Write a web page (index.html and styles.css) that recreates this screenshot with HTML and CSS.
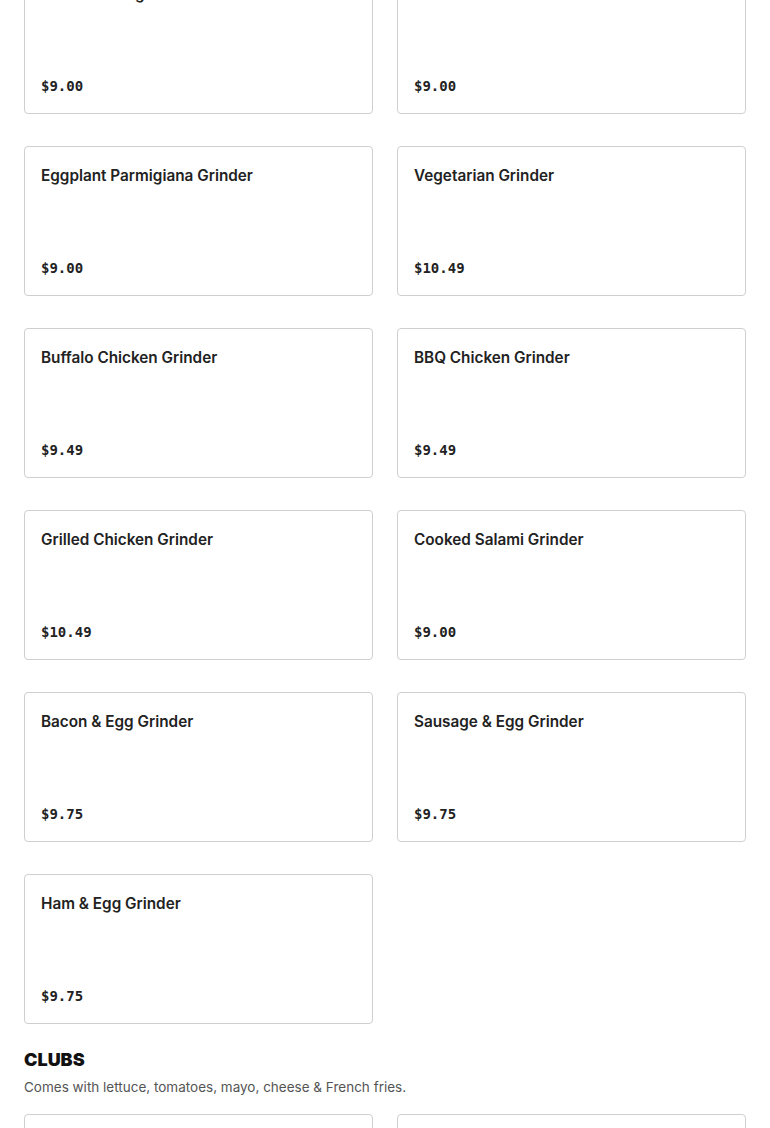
FILE: index.html
```html
<!DOCTYPE html>
<html>
<head>
<meta charset="utf-8">
<link rel="stylesheet" href="styles.css">
</head>
<body>
<main class="menu">
  <section class="section section-scrolled">
    <div class="grid">
      <div class="card"><div class="title">Italian Sausage Grinder</div><div class="price">$9.00</div></div>
      <div class="card"><div class="title">Meatball Grinder</div><div class="price">$9.00</div></div>
      <div class="card"><div class="title">Eggplant Parmigiana Grinder</div><div class="price">$9.00</div></div>
      <div class="card"><div class="title">Vegetarian Grinder</div><div class="price">$10.49</div></div>
      <div class="card"><div class="title">Buffalo Chicken Grinder</div><div class="price">$9.49</div></div>
      <div class="card"><div class="title">BBQ Chicken Grinder</div><div class="price">$9.49</div></div>
      <div class="card"><div class="title">Grilled Chicken Grinder</div><div class="price">$10.49</div></div>
      <div class="card"><div class="title">Cooked Salami Grinder</div><div class="price">$9.00</div></div>
      <div class="card"><div class="title">Bacon &amp; Egg Grinder</div><div class="price">$9.75</div></div>
      <div class="card"><div class="title">Sausage &amp; Egg Grinder</div><div class="price">$9.75</div></div>
      <div class="card"><div class="title">Ham &amp; Egg Grinder</div><div class="price">$9.75</div></div>
    </div>
  </section>
  <section class="section">
    <h2 class="heading">CLUBS</h2>
    <p class="desc">Comes with lettuce, tomatoes, mayo, cheese &amp; French fries.</p>
    <div class="grid">
      <div class="card"><div class="title">Turkey Club</div><div class="price">$10.49</div></div>
      <div class="card"><div class="title">Ham Club</div><div class="price">$10.49</div></div>
    </div>
  </section>
</main>
</body>
</html>
```
FILE: styles.css
```css
html, body {
  margin: 0;
  padding: 0;
  background: #fff;
}
body {
  font-family: "Inter", "Noto Sans", sans-serif;
  color: #222;
  overflow: hidden;
}
.menu {
  padding: 0 24px;
}
.section-scrolled {
  margin-top: -36px;
}
.grid {
  display: grid;
  grid-template-columns: 1fr 1fr;
  column-gap: 24px;
  row-gap: 32px;
}
.card {
  box-sizing: border-box;
  height: 150px;
  border: 1px solid #cfcfcf;
  border-radius: 4px;
  padding: 17px 16px 17px;
  display: flex;
  flex-direction: column;
  justify-content: space-between;
}
.title {
  font-size: 15.3px;
  font-weight: 600;
  line-height: 24px;
  color: #222;
}
.price {
  font-family: "DejaVu Sans Mono", "Liberation Mono", monospace;
  font-weight: bold;
  font-size: 14px;
  line-height: 20px;
  color: #222;
}
.heading {
  margin: 24px 0 0;
  font-family: "Inter", sans-serif;
  font-weight: 900;
  font-size: 18px;
  line-height: 24px;
  color: #111;
}
.desc {
  margin: 5px 0 17px;
  font-size: 13.5px;
  line-height: 20px;
  color: #555;
}
```
